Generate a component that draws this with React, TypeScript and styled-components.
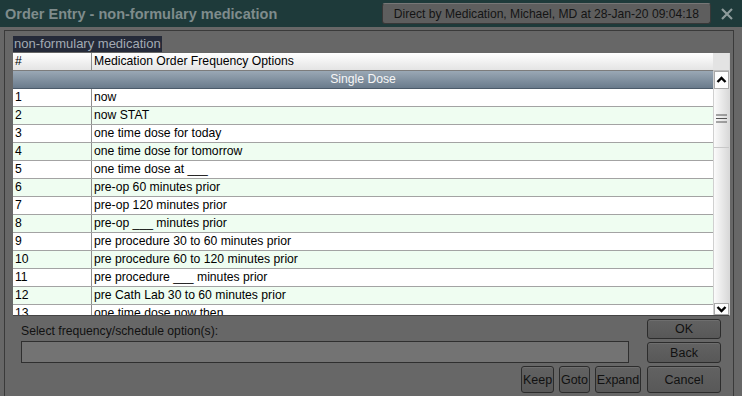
import React from 'react';
import styled, { createGlobalStyle } from 'styled-components';

const GlobalStyle = createGlobalStyle`
  html, body {
    margin: 0;
    padding: 0;
    background: #676767;
    overflow: hidden;
  }
  body {
    font-family: 'Liberation Sans', Arial, sans-serif;
  }
`;

const Window = styled.div`
  width: 742px;
  height: 396px;
  display: flex;
  flex-direction: column;
  background: #676767;
  overflow: hidden;
`;

const TitleBar = styled.div`
  height: 27px;
  flex: none;
  display: flex;
  align-items: center;
  padding: 0 0 0 5px;
  background: #1e3a3a;
`;

const Title = styled.div`
  font-size: 14.5px;
  font-weight: bold;
  color: #7f8c8c;
  white-space: nowrap;
`;

const Badge = styled.div`
  margin-left: auto;
  height: 21px;
  box-sizing: border-box;
  display: flex;
  align-items: center;
  padding: 0 11px;
  background: #5e5e5e;
  border: 1px solid #383838;
  border-top-color: #777;
  border-radius: 3px;
  font-size: 12.1px;
  color: #141414;
  white-space: nowrap;
`;

const Close = styled.div`
  width: 31px;
  display: flex;
  justify-content: center;
  align-items: center;
`;

const Panel = styled.div`
  flex: 1;
  margin: 3px 8px 0 4px;
  border: 1px solid #3a3a3a;
  border-bottom: none;
  padding: 5px 3px 0 8px;
  display: flex;
  flex-direction: column;
  min-height: 0;
`;

const Caption = styled.div`
  align-self: flex-start;
  height: 16px;
  line-height: 16px;
  margin-bottom: 1px;
  padding: 0 1px;
  background: #252a39;
  color: #a3aab3;
  font-size: 13px;
`;

const GridFrame = styled.div`
  width: 716px;
  height: 262px;
  flex: none;
  display: grid;
  grid-template-columns: 1fr 16px;
  grid-template-rows: 18px 1fr;
  border-right: 1px solid #d9d9d9;
  border-bottom: 1px solid #444;
  background: #fff;
  overflow: hidden;
`;

const Row = styled.div<{ $alt?: boolean }>`
  display: grid;
  grid-template-columns: 78px 1fr;
  height: 18px;
  box-sizing: border-box;
  border-bottom: 1px solid #a3a3a3;
  background: ${(p) => (p.$alt ? '#effdf1' : '#ffffff')};
  font-size: 12.2px;
  color: #000;
  line-height: 17px;
`;

const HeaderRow = styled(Row)`
  background: linear-gradient(#ffffff, #e4e4e4);
  border-bottom-color: #7c7c7c;
`;

const Cell = styled.div`
  padding-left: 2px;
  white-space: nowrap;
  overflow: hidden;
  & + & {
    border-left: 1px solid #8e8e8e;
  }
`;

const HeaderCorner = styled.div`
  background: #e3e3e3;
  border-bottom: 1px solid #bdbdbd;
`;

const Body = styled.div`
  overflow: hidden;
`;

const GroupRow = styled.div`
  height: 18px;
  box-sizing: border-box;
  background: linear-gradient(#9aa8b5, #6a7b8c);
  border-bottom: 1px solid #4c5b6a;
  color: #f6f6f6;
  font-size: 12.2px;
  line-height: 17px;
  text-align: center;
`;

const Scrollbar = styled.div`
  display: flex;
  flex-direction: column;
  background: linear-gradient(90deg, #fbfbfb, #d9d9d9);
  border-left: 1px solid #d0d0d0;
`;

const ArrowButton = styled.div<{ $h: number }>`
  height: ${(p) => p.$h}px;
  flex: none;
  box-sizing: border-box;
  border: 1px solid #a9a9a9;
  background: #fdfdfd;
  display: flex;
  align-items: center;
  justify-content: center;
`;

const Track = styled.div`
  flex: 1;
  display: flex;
  flex-direction: column;
`;

const Thumb = styled.div`
  height: 58px;
  display: flex;
  align-items: center;
  justify-content: center;
  border-bottom: 1px solid #c8c8c8;
`;

const Footer = styled.div`
  display: grid;
  grid-template-columns: 1fr 74px;
  grid-template-rows: 20px 21px 27px;
  column-gap: 6px;
  row-gap: 3px;
  padding: 3px 9px 0 8px;
`;

const PromptLabel = styled.div`
  align-self: center;
  padding-top: 3px;
  font-size: 12.2px;
  color: #111;
  white-space: nowrap;
`;

const Entry = styled.div`
  align-self: end;
  height: 22px;
  box-sizing: border-box;
  margin-right: 12px;
  background: #737373;
  border: 1px solid #2f2f2f;
`;

const ButtonRow = styled.div`
  display: flex;
  justify-content: flex-end;
  gap: 5px;
`;

const Button = styled.button<{ $w?: number }>`
  width: ${(p) => (p.$w ? `${p.$w}px` : '100%')};
  height: 100%;
  margin: 0;
  padding: 0;
  box-sizing: border-box;
  background: linear-gradient(#626262, #585858);
  border: 1px solid #2c2c2c;
  border-radius: 3px;
  box-shadow: inset 0 1px 0 #6e6e6e;
  font-family: 'Liberation Sans', Arial, sans-serif;
  font-size: 12.5px;
  color: #111;
  white-space: nowrap;
  cursor: pointer;
`;

const rows = [
  'now',
  'now STAT',
  'one time dose for today',
  'one time dose for tomorrow',
  'one time dose at ___',
  'pre-op 60 minutes prior',
  'pre-op 120 minutes prior',
  'pre-op ___ minutes prior',
  'pre procedure 30 to 60 minutes prior',
  'pre procedure 60 to 120 minutes prior',
  'pre procedure ___ minutes prior',
  'pre Cath Lab 30 to 60 minutes prior',
  'one time dose now then',
];

const Chevron = ({ down }: { down?: boolean }) => (
  <svg width="11" height="8" viewBox="0 0 11 8">
    <path
      d={down ? 'M1.5 2 L5.5 6 L9.5 2' : 'M1.5 6 L5.5 2 L9.5 6'}
      fill="none"
      stroke="#000"
      strokeWidth="2.4"
    />
  </svg>
);

const Grip = () => (
  <svg width="11" height="9" viewBox="0 0 11 9">
    <path d="M0 1 H11 M0 4.5 H11 M0 8 H11" stroke="#555" strokeWidth="1" />
  </svg>
);

const CloseIcon = () => (
  <svg width="12" height="12" viewBox="0 0 12 12">
    <path d="M1 1 L11 11 M11 1 L1 11" stroke="#8d9b9b" strokeWidth="2.2" />
  </svg>
);

const App = () => (
  <>
    <GlobalStyle />
    <Window>
      <TitleBar>
        <Title>Order Entry - non-formulary medication</Title>
        <Badge>Direct by Medication, Michael, MD at 28-Jan-20 09:04:18</Badge>
        <Close>
          <CloseIcon />
        </Close>
      </TitleBar>
      <Panel>
        <Caption>non-formulary medication</Caption>
        <GridFrame>
          <HeaderRow>
            <Cell>#</Cell>
            <Cell>Medication Order Frequency Options</Cell>
          </HeaderRow>
          <HeaderCorner />
          <Body>
            <GroupRow>Single Dose</GroupRow>
            {rows.map((text, i) => (
              <Row key={i} $alt={i % 2 === 1}>
                <Cell>{i + 1}</Cell>
                <Cell>{text}</Cell>
              </Row>
            ))}
          </Body>
          <Scrollbar>
            <ArrowButton $h={18}>
              <Chevron />
            </ArrowButton>
            <Track>
              <Thumb>
                <Grip />
              </Thumb>
            </Track>
            <ArrowButton $h={12}>
              <Chevron down />
            </ArrowButton>
          </Scrollbar>
        </GridFrame>
        <Footer>
          <PromptLabel>Select frequency/schedule option(s):</PromptLabel>
          <Button>OK</Button>
          <Entry />
          <Button>Back</Button>
          <ButtonRow>
            <Button $w={33}>Keep</Button>
            <Button $w={31}>Goto</Button>
            <Button $w={46}>Expand</Button>
          </ButtonRow>
          <Button>Cancel</Button>
        </Footer>
      </Panel>
    </Window>
  </>
);

export default App;
